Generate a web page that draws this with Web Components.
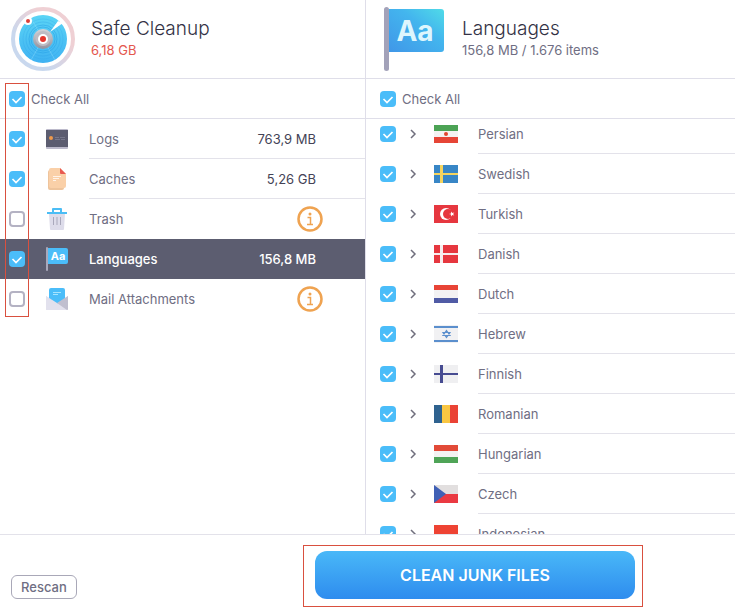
<!DOCTYPE html>
<html lang="en">
<head>
<meta charset="utf-8">
<title>Safe Cleanup</title>
<style>
body {
    margin: 0;
    font-family: Inter, "Liberation Sans", sans-serif;
    font-size: 13px;
    color: #6f6e83;
    background: #fff;
}
</style>
</head>
<body>
<cleanup-app>
    <cleanup-pane slot="categories">
        <pane-header heading="Safe Cleanup" detail="6,18 GB" alert>
            <app-icon slot="icon" name="radar"></app-icon>
        </pane-header>
        <check-all></check-all>
        <category-row name="Logs" size="763,9 MB" icon="logs" checked></category-row>
        <category-row name="Caches" size="5,26 GB" icon="caches" checked></category-row>
        <category-row name="Trash" icon="trash"></category-row>
        <category-row name="Languages" size="156,8 MB" icon="languages" checked selected></category-row>
        <category-row name="Mail Attachments" icon="mail"></category-row>
    </cleanup-pane>
    <cleanup-pane slot="details">
        <pane-header heading="Languages" detail="156,8 MB / 1.676 items">
            <app-icon slot="icon" name="flag"></app-icon>
        </pane-header>
        <check-all></check-all>
        <language-list>
            <language-row name="Persian" flag="ir"></language-row>
            <language-row name="Swedish" flag="se"></language-row>
            <language-row name="Turkish" flag="tr"></language-row>
            <language-row name="Danish" flag="dk"></language-row>
            <language-row name="Dutch" flag="nl"></language-row>
            <language-row name="Hebrew" flag="il"></language-row>
            <language-row name="Finnish" flag="fi"></language-row>
            <language-row name="Romanian" flag="ro"></language-row>
            <language-row name="Hungarian" flag="hu"></language-row>
            <language-row name="Czech" flag="cz"></language-row>
            <language-row name="Indonesian" flag="id"></language-row>
        </language-list>
    </cleanup-pane>
</cleanup-app>

<script>
const icons = {
    radar: `<svg width="64" height="64" viewBox="0 0 64 64">
        <defs>
            <linearGradient id="ring" x1="0" y1="1" x2="1" y2="0">
                <stop offset=".3" stop-color="#c9d8ee"/><stop offset=".7" stop-color="#efd0d4"/>
            </linearGradient>
            <linearGradient id="dish" x1="0" y1="0" x2="0" y2="1">
                <stop offset="0" stop-color="#5bd4f5"/><stop offset="1" stop-color="#3fb2f2"/>
            </linearGradient>
            <linearGradient id="knob" x1="0" y1="0" x2="0" y2="1">
                <stop offset="0" stop-color="#d5d3d8"/><stop offset="1" stop-color="#92929e"/>
            </linearGradient>
        </defs>
        <circle cx="32" cy="32" r="30" fill="#fff" stroke="url(#ring)" stroke-width="4"/>
        <circle cx="32" cy="32" r="24" fill="url(#dish)"/>
        <g fill="none" stroke="#249de5" stroke-opacity=".5">
            <circle cx="32" cy="32" r="12"/><circle cx="32" cy="32" r="14"/>
            <circle cx="32" cy="32" r="17" stroke-opacity=".3"/>
            <circle cx="32" cy="32" r="20" stroke-opacity=".2"/>
        </g>
        <path d="M20 11l24 42M20 53l12-21" stroke="#a0e6ff" stroke-opacity=".35"/>
        <path d="M39 25 47 14 52 16z" fill="#fff"/>
        <circle cx="17" cy="14" r="4" fill="#fff"/>
        <circle cx="17" cy="14" r="2" fill="#dd4038"/>
        <circle cx="32" cy="32" r="10" fill="url(#knob)"/>
        <circle cx="32" cy="31.5" r="7.5" fill="#bebdc5"/>
        <circle cx="32" cy="32" r="5" fill="#fff"/>
        <circle cx="32" cy="32" r="3" fill="#e5372f"/>
    </svg>`,
    flag: `<svg width="64" height="64" viewBox="0 0 64 64">
        <defs>
            <linearGradient id="cloth" x1="0" y1="1" x2="1" y2="0">
                <stop offset="0" stop-color="#4097e8"/><stop offset=".6" stop-color="#43b5ee"/>
                <stop offset="1" stop-color="#50dbe8"/>
            </linearGradient>
        </defs>
        <path d="M5 2h52a3 3 0 0 1 3 3v37a3 3 0 0 1-3 3H5z" fill="url(#cloth)"/>
        <rect x="0" y="0" width="5" height="64" rx="2.5" fill="#a3a2b9"/>
        <text x="31" y="34" text-anchor="middle" font-size="28" font-weight="700" fill="#def6fd">Aa</text>
    </svg>`,
    logs: `<svg width="24" height="24" viewBox="0 0 24 24">
        <rect x="1" y="2" width="22" height="20" rx="1" fill="#bcbacb"/>
        <rect x="1" y="3" width="22" height="17" fill="#5c5d70"/>
        <circle cx="6" cy="11" r="2" fill="#ee9a4c"/>
        <path d="M10 10.500h4M15 10.500h5M10 12.500h5M16 12.500h4" stroke="#77788b"/>
    </svg>`,
    caches: `<svg width="24" height="24" viewBox="0 0 24 24">
        <path d="M5 3h10l4 5v13a2 2 0 0 1-2 2H5a2 2 0 0 1-2-2V5a2 2 0 0 1 2-2z" fill="#eec49c"/>
        <path d="M6 1h9l6 6v12a2 2 0 0 1-2 2H6a2 2 0 0 1-2-2V3a2 2 0 0 1 2-2z" fill="#fad0a8"/>
        <path d="M15 1l6 6h-5a1 1 0 0 1-1-1z" fill="#e85a50"/>
        <path d="M8 9.500h8M8 11.500h6M8 13.500h3" stroke="#fff3e8"/>
    </svg>`,
    trash: `<svg width="24" height="24" viewBox="0 0 24 24">
        <path d="M4 7h16l-1 15a1 1 0 0 1-1 1H6a1 1 0 0 1-1-1z" fill="#dddcea"/>
        <path d="M8.500 10v8M12 10v8M15.500 10v8" stroke="#a9a8bb"/>
        <path d="M2 5h20v2H2z" fill="#4bbdf5"/>
        <path d="M8 5V2h8v3" fill="none" stroke="#4bbdf5" stroke-width="2" stroke-linejoin="round"/>
    </svg>`,
    languages: `<svg width="24" height="24" viewBox="0 0 24 24">
        <path d="M3 1h18a2 2 0 0 1 2 2v12a2 2 0 0 1-2 2H3z" fill="#4bbdf9"/>
        <rect x="1" y="0" width="2" height="24" rx="1" fill="#a9a8bb"/>
        <text x="13" y="13" text-anchor="middle" font-size="11" font-weight="700" fill="#fff">Aa</text>
    </svg>`,
    mail: `<svg width="24" height="24" viewBox="0 0 24 24">
        <path d="M1 9l11 8 11-8v13a1 1 0 0 1-1 1H2a1 1 0 0 1-1-1z" fill="#dddcea"/>
        <path d="M4 3a2 2 0 0 1 2-2h12a2 2 0 0 1 2 2v10l-8 4-8-4z" fill="#4bbdf9"/>
        <path d="M8 5.500h8M8 7.500h5" stroke="#a6e4ff"/>
        <path d="M1 9l22 14H2a1 1 0 0 1-1-1z" fill="#e2e1ed"/>
        <path d="M23 9v13a1 1 0 0 1-1 1L12 16z" fill="#c0bfcf"/>
    </svg>`,
    info: `<svg width="26" height="26" viewBox="0 0 26 26">
        <circle cx="13" cy="13" r="11.5" fill="#fff" stroke="#efa351" stroke-width="2.5"/>
        <circle cx="13" cy="8" r="1.5" fill="#efa351"/>
        <path d="M10.500 11.500h3V18M10 18.500h6" fill="none" stroke="#efa351" stroke-width="1.5"/>
    </svg>`
};

const flags = {
    ir: `<path fill="#f4f2f2" d="M0 0h24v18H0z"/><path fill="#4ca355" d="M0 0h24v6H0z"/>
        <path fill="#e64536" d="M0 12h24v6H0z"/><circle cx="12" cy="9" r="2" fill="#e0452e"/>`,
    se: `<path fill="#3886c6" d="M0 0h24v18H0z"/><path fill="#f4d35e" d="M6 0h3v18H6zM0 8h24v2H0z"/>`,
    tr: `<path fill="#e6373f" d="M0 0h24v18H0z"/><circle cx="12" cy="9" r="6" fill="#fff"/>
        <circle cx="14" cy="9" r="5" fill="#e6373f"/>
        <path fill="#fff" d="M15 9l2-.6.2-2 1.200 1.700 1.900-.7-1.200 1.600 1.200 1.600-1.900-.7-1.200 1.700-.2-2z"/>`,
    dk: `<path fill="#e6373f" d="M0 0h24v18H0z"/><path fill="#f6edee" d="M6 0h3v18H6zM0 8h24v2H0z"/>`,
    nl: `<path fill="#f3f2f3" d="M0 0h24v18H0z"/><path fill="#e84436" d="M0 0h24v5H0z"/>
        <path fill="#505ba5" d="M0 13h24v5H0z"/>`,
    il: `<path fill="#f1f1f3" d="M0 0h24v18H0z"/><path fill="#5b8fcd" d="M0 1h24v2H0zM0 15h24v2H0z"/>
        <path fill="none" stroke="#5b8fcd" stroke-width="1.2" d="M12.500 5.500l3.500 5H9zM12.500 12.500l3.500-5H9z"/>`,
    fi: `<path fill="#efeff1" d="M0 0h24v18H0z"/><path fill="#464b91" d="M6 0h3v18H6zM0 8h24v2H0z"/>`,
    ro: `<path fill="#2f628f" d="M0 0h8v18H0z"/><path fill="#f9c642" d="M8 0h8v18H8z"/>
        <path fill="#ea4335" d="M16 0h8v18h-8z"/>`,
    hu: `<path fill="#f3f2f2" d="M0 0h24v18H0z"/><path fill="#e24a38" d="M0 0h24v6H0z"/>
        <path fill="#4fa457" d="M0 12h24v6H0z"/>`,
    cz: `<path fill="#e2dfdf" d="M0 0h24v9H0z"/><path fill="#ea3a42" d="M0 9h24v9H0z"/>
        <path fill="#4060b5" d="M0 0l12 9-12 9z"/>`,
    id: `<path fill="#f3f2f2" d="M0 0h24v18H0z"/><path fill="#ee4333" d="M0 0h24v12H0z"/>`
};

// shared by every element that holds a tick box
const checkboxStyle = `
input[type="checkbox"] {
    appearance: none;
    flex: none;
    box-sizing: border-box;
    width: 16px;
    height: 16px;
    margin: 0;
    border: 2px solid #b4b2c3;
    border-radius: 4px;
    background: #fff;
}

input[type="checkbox"]:checked {
    border: none;
    background: #4bbdf9 url('data:image/svg+xml,<svg xmlns="http://www.w3.org/2000/svg" viewBox="0 0 16 16"><path d="M3.500 8l3.500 3.500 5.500-5.500" fill="none" stroke="white" stroke-width="1.7"/></svg>');
}
`;

class AppIcon extends HTMLElement {
    constructor() {
        super();
        this.attachShadow({ mode: 'open' });
    }

    connectedCallback() {
        this.shadowRoot.innerHTML = `
<style>
:host {
    display: block;
    flex: none;
}

svg {
    display: block;
}
</style>
${icons[this.getAttribute('name')]}`;
    }
}

class PaneHeader extends HTMLElement {
    constructor() {
        super();
        this.attachShadow({ mode: 'open' });
    }

    connectedCallback() {
        this.shadowRoot.innerHTML = `
<style>
:host {
    display: flex;
    align-items: center;
    gap: var(--header-gap, 16px);
    box-sizing: border-box;
    height: 79px;
    padding: 0 var(--header-inset, 11px);
    border-bottom: 1px solid #dfdee9;
}

h2 {
    margin: 0;
    font-size: 19px;
    line-height: 22px;
    font-weight: 300;
    color: #333245;
}

p {
    margin: 0;
    line-height: 20px;
}

:host([alert]) p {
    color: #e4574f;
}
</style>
<slot name="icon"></slot>
<div>
    <h2>${this.getAttribute('heading')}</h2>
    <p>${this.getAttribute('detail')}</p>
</div>`;
    }
}

class CheckAll extends HTMLElement {
    constructor() {
        super();
        this.attachShadow({ mode: 'open' });
        this.shadowRoot.innerHTML = `
<style>
${checkboxStyle}
:host {
    display: block;
    border-bottom: 1px solid #dfdee9;
}

label {
    display: flex;
    align-items: center;
    gap: 6px;
    height: 39px;
    padding-left: var(--inset, 9px);
}
</style>
<label><input type="checkbox" checked>Check All</label>`;
    }
}

class CategoryRow extends HTMLElement {
    constructor() {
        super();
        this.attachShadow({ mode: 'open' });
    }

    connectedCallback() {
        const size = this.getAttribute('size');
        this.shadowRoot.innerHTML = `
<style>
${checkboxStyle}
:host {
    display: flex;
    align-items: center;
    height: 40px;
    padding-left: 9px;
}

label {
    display: flex;
    align-items: center;
    flex: 1;
    height: 100%;
}

app-icon {
    margin: 0 20px;
}

.body {
    display: flex;
    align-items: center;
    flex: 1;
    box-sizing: border-box;
    height: 100%;
    padding-right: 49px;
    border-bottom: 1px solid transparent;
}

:host([size]:not([selected])) .body {
    border-color: #e3e2ea;
}

.name {
    flex: 1;
}

.size {
    color: #444356;
}

button {
    height: 26px;
    margin-right: -7px;
    padding: 0;
    border: none;
    background: none;
}

button app-icon {
    margin: 0;
}

:host([selected]) {
    color: #fff;
    font-weight: 500;
    background: #5c5d70;
}

:host([selected]) .size {
    color: #fff;
}
</style>
<label>
    <input type="checkbox" ${this.hasAttribute('checked') ? 'checked' : ''}>
    <app-icon name="${this.getAttribute('icon')}"></app-icon>
    <span class="body">
        <span class="name">${this.getAttribute('name')}</span>
        ${size ? `<span class="size">${size}</span>`
            : '<button type="button" aria-label="Info"><app-icon name="info"></app-icon></button>'}
    </span>
</label>`;
    }
}

class LanguageList extends HTMLElement {
    constructor() {
        super();
        this.attachShadow({ mode: 'open' });
        this.shadowRoot.innerHTML = `
<style>
:host {
    display: block;
    flex: 1 1 0;
    min-height: 0;
    overflow: hidden;
}

div {
    margin-top: -5px;
}
</style>
<div><slot></slot></div>`;
    }
}

class LanguageRow extends HTMLElement {
    constructor() {
        super();
        this.attachShadow({ mode: 'open' });
    }

    connectedCallback() {
        const name = this.getAttribute('name');
        this.shadowRoot.innerHTML = `
<style>
${checkboxStyle}
:host {
    display: flex;
    align-items: center;
    height: 40px;
    padding-left: 14px;
}

button {
    display: flex;
    margin: 0 16px 0 12px;
    padding: 0;
    border: none;
    background: none;
}

label {
    display: flex;
    align-items: center;
    flex: 1;
    gap: 20px;
    height: 100%;
}

span {
    flex: 1;
    box-sizing: border-box;
    height: 100%;
    line-height: 40px;
    border-bottom: 1px solid #e3e2ea;
}
</style>
<input type="checkbox" id="lang" checked>
<button type="button" aria-label="Expand ${name}">
    <svg width="10" height="10" viewBox="0 0 10 10"><path d="M3 1l4 4-4 4" fill="none" stroke="#706f7d" stroke-width="1.5"/></svg>
</button>
<label for="lang">
    <svg width="24" height="18" viewBox="0 0 24 18">${flags[this.getAttribute('flag')]}</svg>
    <span>${name}</span>
</label>`;
    }
}

class CleanupPane extends HTMLElement {
    constructor() {
        super();
        this.attachShadow({ mode: 'open' });
        this.shadowRoot.innerHTML = `
<style>
:host {
    display: flex;
    flex-direction: column;
    min-width: 0;
    min-height: 0;
}

:host([slot="details"]) {
    --inset: 14px;
    --header-inset: 18px;
    --header-gap: 14px;
}
</style>
<slot></slot>`;
    }
}

class CleanupApp extends HTMLElement {
    constructor() {
        super();
        this.attachShadow({ mode: 'open' });
        this.shadowRoot.innerHTML = `
<style>
:host {
    display: flex;
    flex-direction: column;
    position: relative;
    height: 100vh;
}

main {
    display: grid;
    grid-template-columns: minmax(0, 366px) minmax(0, 1fr);
    grid-template-rows: minmax(0, 1fr);
    flex: 1;
    min-height: 0;
}

slot[name="categories"]::slotted(*) {
    border-right: 1px solid #dfdee9;
}

footer {
    display: flex;
    align-items: flex-end;
    justify-content: space-between;
    padding: 10px 92px 3px 11px;
    border-top: 1px solid #e3e2ea;
}

button {
    font-family: inherit;
    cursor: pointer;
}

.rescan {
    height: 24px;
    margin-bottom: 8px;
    padding: 0 9px;
    border: 1px solid #a9a8b8;
    border-radius: 6px;
    font-size: 13px;
    font-weight: 500;
    color: #6f6e83;
    background: #fff;
}

.callout {
    border: 1px solid #d9503f;
}

.primary {
    padding: 5px 7px 7px 11px;
}

.checks {
    position: absolute;
    left: 5px;
    top: 83px;
    width: 22px;
    height: 232px;
    pointer-events: none;
}

.clean {
    display: block;
    width: 320px;
    height: 48px;
    border: none;
    border-radius: 12px;
    font-size: 16px;
    font-weight: 600;
    color: #fff;
    background: linear-gradient(#49b8f8, #2e8cee);
}
</style>
<main>
    <slot name="categories"></slot>
    <slot name="details"></slot>
</main>
<footer>
    <button type="button" class="rescan">Rescan</button>
    <div class="callout primary">
        <button type="button" class="clean">CLEAN JUNK FILES</button>
    </div>
</footer>
<div class="callout checks"></div>`;
    }
}

customElements.define('app-icon', AppIcon);
customElements.define('pane-header', PaneHeader);
customElements.define('check-all', CheckAll);
customElements.define('category-row', CategoryRow);
customElements.define('language-list', LanguageList);
customElements.define('language-row', LanguageRow);
customElements.define('cleanup-pane', CleanupPane);
customElements.define('cleanup-app', CleanupApp);
</script>
</body>
</html>
